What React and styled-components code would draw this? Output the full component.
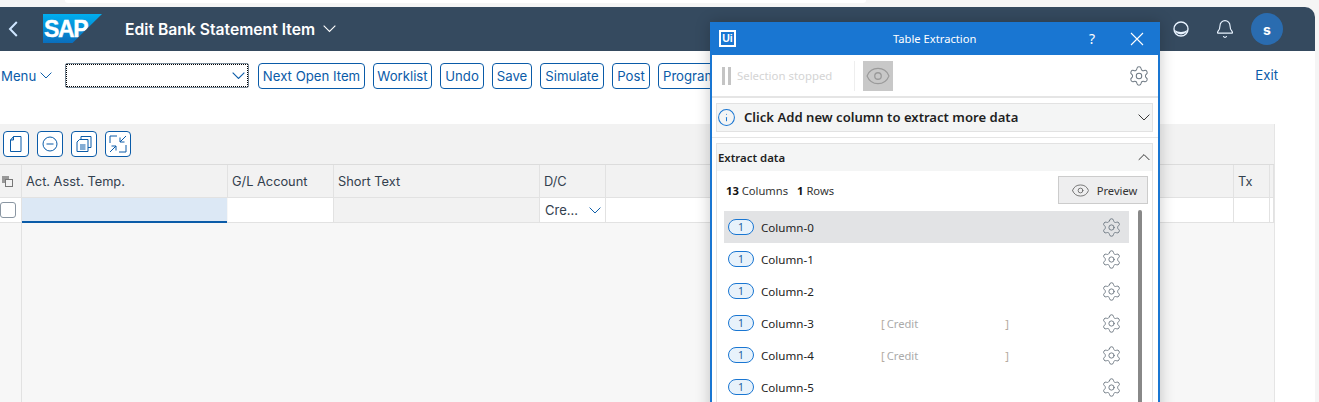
import React from "react";
import styled, { createGlobalStyle } from "styled-components";
import { Bell, Settings, Eye, Info } from "lucide-react";

const Global = createGlobalStyle`
  html, body { margin: 0; padding: 0; background: #f5f5f5; overflow: hidden; }
  * { box-sizing: border-box; }
  #root { width: 1319px; height: 402px; overflow: hidden; position: relative; }
`;
const sap = `"Inter", "Liberation Sans", sans-serif`;
const segoe = `"Noto Sans", "Open Sans", sans-serif`;

const Page = styled.div`
  width: 1319px; height: 402px; position: relative; overflow: hidden;
  font-family: ${sap}; background: #f5f5f5;
`;
const TabEdge = styled.div`
  height: 3px; width: 801px; margin: 0 0 4px 65px; background: #fff;
  border-radius: 0 0 8px 8px;
`;
const Shell = styled.div`
  width: 1315px; height: 395px; background: #fff; border-top-right-radius: 10px;
  overflow: hidden; display: flex; flex-direction: column;
`;
const Header = styled.header`
  height: 44px; flex: none; background: #354a5f; color: #fff;
  display: flex; align-items: center; position: relative;
`;
const Back = styled.div`
  width: 43px; flex: none; padding-left: 8px; display: flex; align-items: center; color: #cfe6ff;
`;
const Logo = styled.div`
  width: 59px; height: 29px; flex: none; position: relative; margin-top: -1px;
  background: linear-gradient(180deg, #00aeef 0%, #0a6ebd 100%);
  clip-path: polygon(0 0, 100% 0, 50% 100%, 0 100%);
  color: #fff; font: bold 23px/30px "Liberation Sans", sans-serif;
  letter-spacing: -1.4px; padding-left: 1px; overflow: hidden;
  -webkit-text-stroke: .4px #fff;
`;
const Title = styled.div`
  margin-left: 23px; font-size: 15.7px; font-weight: 600; display: flex; align-items: center; gap: 8px; white-space: nowrap;
`;
const HeaderRight = styled.div`
  margin-left: auto; display: flex; align-items: center; padding-right: 32px; color: #e8f3ff;
`;
const HeaderIcon = styled.div`
  width: 16px; height: 16px; margin-right: 28px; display: flex; align-items: center; justify-content: center;
  svg { flex: none; }
`;
const Avatar = styled.div`
  width: 32px; height: 32px; border-radius: 50%; background: #2a6cb0; color: #fff;
  margin-left: -10px; font-size: 14px; font-weight: 700; display: flex; align-items: center; justify-content: center;
`;
const Toolbar = styled.div`
  height: 73px; flex: none; padding: 12px 37px 0 1px; display: flex; align-items: flex-start; color: #0a5ba8;
`;
const Menu = styled.div`
  width: 64px; height: 25px; font-size: 13.2px; display: flex; align-items: center; gap: 4px; color: #0a5ba8;
`;
const SelectBox = styled.div`
  width: 184px; height: 25px; margin-right: 9px; border: 1px solid #7a8a99; border-radius: 2px;
  outline: 1px dotted #000; outline-offset: -2px; display: flex; align-items: center; justify-content: flex-end;
  padding-right: 3px; color: #0a5ba8;
`;
const Btn = styled.button`
  height: 26px; width: ${p => p.$w}px; margin-right: 8px; border: 1px solid #0a5ba8; border-radius: 4px; background: #fff;
  color: #0a5ba8; font: 13.2px ${sap}; padding: 0; white-space: nowrap; overflow: hidden;
  text-align: center; flex: none;
`;
const Exit = styled.div`
  margin-left: auto; height: 25px; line-height: 25px; font-size: 13.2px;
`;
const TableArea = styled.section`
  width: 1275px; flex: 1; background: #f7f7f7; border-right: 1px solid #e5e5e5; display: flex; flex-direction: column; position: relative;
`;
const IconBar = styled.div`
  height: 40px; background: #f2f2f2; padding: 7px 3px 0; display: flex; gap: 8px;
`;
const IconBtn = styled.button`
  width: 26px; height: 26px; padding: 0; border: 1px solid #0a5ba8; border-radius: 4px; background: #fff; color: #0a5ba8;
  display: flex; align-items: center; justify-content: center;
`;
const cols = "22px 206px 106px 206px 66px 628px 36px 4px";
const HeadRow = styled.div`
  display: grid; grid-template-columns: ${cols}; height: 34px; background: #f2f2f2;
  border-top: 1px solid #dcdcdc; border-bottom: 1px solid #e2e2e2;
`;
const HeadCell = styled.div`
  padding: 1px 0 0 ${p => p.$tight ? 2 : 4}px; font-size: 12.8px; color: #32404e; line-height: 32px; min-width: 0;
  border-right: 1px solid #e2e2e2; white-space: nowrap; overflow: hidden; display: flex; align-items: center;
`;
const DataRow = styled.div`
  display: grid; grid-template-columns: ${cols}; height: 25px; border-bottom: 1px solid #e2e2e2;
`;
const DataCell = styled.div`
  background: ${p => p.$gray ? "#f2f2f2" : "#fff"}; border-right: 1px solid #e2e2e2; min-width: 0;
`;
const SelectCell = styled(DataCell)`
  display: flex; align-items: center; padding: 0 4px 0 5px; font-size: 13px; color: #32404e; justify-content: space-between;
`;
const ActiveCell = styled.div`
  background: #dce8f5; border-bottom: 2px solid #0a5ba8; margin-bottom: -1px; margin-right: 1px;
`;
const RowCheck = styled.div`
  width: 16px; height: 16px; border: 1px solid #8a96a2; border-radius: 3px; background: #fff;
`;
const CheckCell = styled.div`
  background: #fff; border-right: 1px solid #e2e2e2; display: flex; align-items: center;
`;
const Rest = styled.div`
  flex: 1; width: 22px; border-right: 1px solid #e2e2e2;
`;
const Dialog = styled.aside`
  position: absolute; left: 710px; top: 22px; width: 450px; height: 400px; background: #fff;
  border: 2px solid #1976d2; border-top: 0; border-bottom: 0;
  box-shadow: 0 0 14px rgba(0,0,0,.22); font-family: ${segoe}; display: flex; flex-direction: column;
`;
const DTitle = styled.div`
  height: 33px; margin: 0 -2px; flex: none; background: #1976d2; color: #fff; display: flex; align-items: center; padding: 0 16px 0 9px;
`;
const UiLogo = styled.div`
  width: 17px; height: 17px; border: 2px solid #fff; font: bold 10.5px/13px "Liberation Sans", sans-serif; text-align: center; color: #fff; flex: none;
`;
const DTitleText = styled.div`
  margin-left: 157px; font-size: 11.2px; white-space: nowrap;
`;
const DHelp = styled.div`
  margin-left: auto; margin-right: 35px; font-size: 14px;
`;
const DTool = styled.div`
  height: 43px; flex: none; border-bottom: 2px solid #e5e5e5; display: flex; align-items: center; padding: 0 8px 0 10px;
`;
const Pause = styled.div`
  width: 9px; height: 18px; border-left: 3px solid #c4c4c4; border-right: 3px solid #c4c4c4; margin: 0 6px 0 0;
`;
const Stopped = styled.div`
  font-size: 11.4px; color: #d4d4d4; width: 117px; white-space: nowrap;
`;
const VSep = styled.div`
  width: 1px; height: 30px; background: #eee; margin-right: 8px;
`;
const EyeBox = styled.div`
  width: 30px; height: 30px; background: #c8c8c8; color: #9a9a9a; display: flex; align-items: center; justify-content: center;
`;
const Gear = styled(Settings)`
  color: #6f7a84; margin-left: auto; flex: none;
`;
const Section = styled.div`
  margin: 5px 5px 0 4px; border: 1px solid #e2e2e2; background: #f4f5f5; height: 29px; flex: none;
  display: flex; align-items: center; padding: 0 2px 0 0;
`;
const InfoText = styled.div`
  margin-left: 8px; padding-top: 1px; font-size: 13.1px; font-weight: 600; color: #1f1f1f; white-space: nowrap; flex: 1; line-height: 1;
`;
const Divider = styled.div`
  height: 1px; background: #e5e5e5; margin-top: 5px; flex: none;
`;
const Panel = styled.div`
  margin: 5px 5px 0 4px; border: 1px solid #e2e2e2; border-bottom: 0; flex: 1; min-height: 0; position: relative; overflow: hidden;
`;
const PanelHead = styled.div`
  height: 27px; background: #f4f5f5; display: flex; align-items: center; padding: 0 2px 0 1px; font-size: 11.4px; font-weight: 600; color: #1f1f1f; justify-content: space-between;
`;
const CountRow = styled.div`
  height: 28px; margin-top: 5px; padding: 0 4px 0 9px; display: flex; align-items: center; justify-content: space-between; font-size: 11.2px; color: #333;
`;
const Counts = styled.div`
  display: flex; gap: 9px;
  b { font-weight: 700; color: #111; }
`;
const Preview = styled.button`
  width: 90px; height: 28px; padding: 0 0 0 2px; background: #eeeeef; border: 1px solid #ccc; color: #333; font: 11.2px ${segoe};
  display: flex; align-items: center; justify-content: center; gap: 7px;
  svg { color: #666; }
`;
const ListWrap = styled.div`
  display: flex; padding-left: 7px;
`;
const List = styled.div`
  width: 405px; flex: none; margin-top: 7px;
`;
const Row = styled.div`
  height: 32px; display: flex; align-items: center; padding: 0 7px 0 4px; background: ${p => p.$sel ? "#e2e3e5" : "transparent"};
`;
const Pill = styled.div`
  width: 26px; height: 16px; border: 1px solid #1976d2; border-radius: 8px; background: #e8f2fb; color: #1b5d9e;
  font-size: 10.4px; line-height: 14px; text-align: center; flex: none;
`;
const ColName = styled.div`
  margin-left: 7px; width: 120px; font-size: 11.6px; color: #222; white-space: nowrap; flex: none;
`;
const Value = styled.div`
  width: 130px; font-size: 11.2px; color: #aaa; display: flex; justify-content: space-between; white-space: nowrap;
`;
const Bracket = styled.span`
  color: #b5aba0;
  margin-right: 2px;
`;
const Thumb = styled.div`
  width: 4px; background: #888; margin: 6px 0 0 9px; height: 240px; border-radius: 2px;
`;

const Chev = ({ w = 12, up }) => (
  <svg width={w} height={w * 0.55} viewBox="0 0 14 7.7" fill="none" stroke="currentColor" strokeWidth="1.15" style={{ flex: "none", transform: up ? "scaleY(-1)" : undefined }}>
    <path d="M.7.7 7 7 13.3.7" />
  </svg>
);
const BackIcon = () => (
  <svg width="10" height="16" viewBox="0 0 10 16" fill="none" stroke="currentColor" strokeWidth="2">
    <path d="M8.8 1 2 8l6.8 7" />
  </svg>
);
const CloseIcon = () => (
  <svg width="14" height="14" viewBox="0 0 14 14" fill="none" stroke="currentColor" strokeWidth="1.1" style={{ flex: "none" }}>
    <path d="M1 1l12 12M13 1 1 13" />
  </svg>
);
const CopyIcon = () => (
  <svg width="16" height="16" viewBox="0 0 16 16" fill="none" stroke="currentColor" strokeWidth="1">
    <path d="M5.5 .5h7.5v15H2.5V4z" /><path d="M5.5.5v3.5h-3" fill="currentColor" fillOpacity=".25" />
  </svg>
);
const MinusIcon = () => (
  <svg width="16" height="16" viewBox="0 0 16 16" fill="none" stroke="currentColor" strokeWidth="1">
    <circle cx="8" cy="8" r="7" /><path d="M4.5 8h7" strokeWidth="1.2" />
  </svg>
);
const DocsIcon = () => (
  <svg width="16" height="16" viewBox="0 0 16 16" fill="none" stroke="currentColor" strokeWidth="1">
    <path d="M5 3V.5h10v11h-3" /><path d="M3.5 3.5H12v12H1V6z" /><path d="M4 9h5.5M4 11h5.5M4 13h5.5" />
  </svg>
);
const CollapseIcon = () => (
  <svg width="18" height="18" viewBox="0 0 18 18" fill="none" stroke="currentColor" strokeWidth="1">
    <path d="M8 1H1v7" /><path d="M17 10v7h-7" /><path d="M17 1l-6 6M11 2.5V7h4.5" /><path d="M1 17l6-6M2.5 11H7v4.5" />
  </svg>
);
const CornerIcon = () => (
  <svg width="11" height="11" viewBox="0 0 11 11" fill="none" stroke="#777" strokeWidth="1">
    <rect x=".5" y=".5" width="6" height="6" fill="#999" stroke="#999" /><rect x="3.5" y="3.5" width="7" height="7" fill="#f2f2f2" />
  </svg>
);
const OrbIcon = () => (
  <svg width="16" height="16" viewBox="0 0 16 16">
    <circle cx="8" cy="8" r="7" fill="none" stroke="#e8f3ff" strokeWidth="1.4" />
    <path d="M1.5 9 Q8 13 14.5 9 A7 7 0 0 1 1.5 9z" fill="#e8f3ff" />
  </svg>
);

const columns = [
  { n: "Column-0", sel: true }, { n: "Column-1" }, { n: "Column-2" },
  { n: "Column-3", v: "Credit" }, { n: "Column-4", v: "Credit" }, { n: "Column-5" },
];
const buttons = [["Next Open Item", 107], ["Worklist", 59], ["Undo", 44], ["Save", 40], ["Simulate", 64], ["Post", 38], ["Program", 63]];

export default function App() {
  return (
    <Page>
      <Global />
      <TabEdge />
      <Shell>
        <Header>
          <Back><BackIcon /></Back>
          <Logo>SAP</Logo>
          <Title>Edit Bank Statement Item <Chev w={13} /></Title>
          <HeaderRight>
            <HeaderIcon><OrbIcon /></HeaderIcon>
            <HeaderIcon><Bell size={20} strokeWidth={1.4} /></HeaderIcon>
            <Avatar>s</Avatar>
          </HeaderRight>
        </Header>
        <Toolbar>
          <Menu>Menu <Chev /></Menu>
          <SelectBox><Chev w={13} /></SelectBox>
          {buttons.map(([t, w]) => <Btn key={t} $w={w}>{t}</Btn>)}
          <Exit>Exit</Exit>
        </Toolbar>
        <TableArea>
          <IconBar>
            <IconBtn><CopyIcon /></IconBtn>
            <IconBtn><MinusIcon /></IconBtn>
            <IconBtn><DocsIcon /></IconBtn>
            <IconBtn><CollapseIcon /></IconBtn>
          </IconBar>
          <HeadRow>
            <HeadCell $tight><CornerIcon /></HeadCell>
            <HeadCell>Act. Asst. Temp.</HeadCell>
            <HeadCell>G/L Account</HeadCell>
            <HeadCell>Short Text</HeadCell>
            <HeadCell>D/C</HeadCell>
            <HeadCell />
            <HeadCell>Tx</HeadCell>
            <HeadCell $tight />
          </HeadRow>
          <DataRow>
            <CheckCell><RowCheck /></CheckCell>
            <ActiveCell />
            <DataCell />
            <DataCell $gray />
            <SelectCell>Cre... <span style={{ color: "#0a5ba8", display: "flex" }}><Chev /></span></SelectCell>
            <DataCell />
            <DataCell />
            <DataCell />
          </DataRow>
          <Rest />
        </TableArea>
      </Shell>
      <Dialog>
        <DTitle>
          <UiLogo>Ui</UiLogo>
          <DTitleText>Table Extraction</DTitleText>
          <DHelp>?</DHelp>
          <CloseIcon />
        </DTitle>
        <DTool>
          <Pause />
          <Stopped>Selection stopped</Stopped>
          <VSep />
          <EyeBox><Eye size={26} strokeWidth={1.2} /></EyeBox>
          <Gear size={22} strokeWidth={1.1} />
        </DTool>
        <Section>
          <Info size={19} strokeWidth={1.3} color="#1976d2" style={{ flex: "none" }} />
          <InfoText>Click Add new column to extract more data</InfoText>
          <span style={{ color: "#333", display: "flex" }}><Chev /></span>
        </Section>
        <Divider />
        <Panel>
          <PanelHead>Extract data <span style={{ color: "#333", display: "flex" }}><Chev up /></span></PanelHead>
          <CountRow>
            <Counts><span><b>13</b> Columns</span><span><b>1</b> Rows</span></Counts>
            <Preview><Eye size={19} strokeWidth={1.1} /> Preview</Preview>
          </CountRow>
          <ListWrap>
            <List>
              {columns.map(c => (
                <Row key={c.n} $sel={c.sel}>
                  <Pill>1</Pill>
                  <ColName>{c.n}</ColName>
                  {c.v ? <Value><span><Bracket>[</Bracket>{c.v}</span><Bracket>]</Bracket></Value> : null}
                  <Gear size={21} strokeWidth={1.1} />
                </Row>
              ))}
            </List>
            <Thumb />
          </ListWrap>
        </Panel>
      </Dialog>
    </Page>
  );
}
